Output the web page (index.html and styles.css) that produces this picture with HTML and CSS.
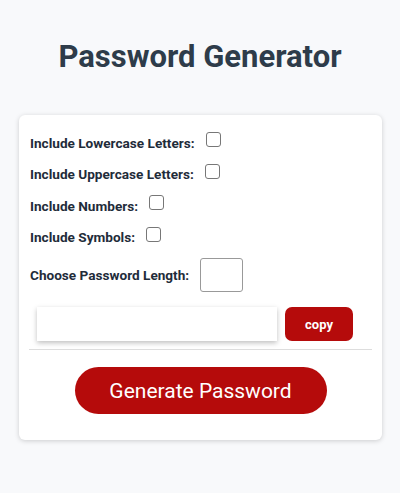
FILE: index.html
```html
<!DOCTYPE html>
<html>
<head>
<meta charset="utf-8">
<link rel="stylesheet" href="styles.css">
</head>
<body>
<h1 class="title">Password Generator</h1>
<div class="card">
  <div class="row"><label>Include Lowercase Letters:</label><input type="checkbox" class="check"></div>
  <div class="row"><label>Include Uppercase Letters:</label><input type="checkbox" class="check"></div>
  <div class="row"><label>Include Numbers:</label><input type="checkbox" class="check"></div>
  <div class="row"><label>Include Symbols:</label><input type="checkbox" class="check"></div>
  <div class="row length-row"><label>Choose Password Length:</label><input type="text" class="length"></div>
  <div class="output-row">
    <input type="text" class="output" readonly>
    <button class="copy">copy</button>
  </div>
  <hr class="divider">
  <div class="gen-wrap"><button class="generate">Generate Password</button></div>
</div>
</body>
</html>
```
FILE: styles.css
```css
html, body {
  margin: 0;
  padding: 0;
}
body {
  background: #f8f9fb;
  font-family: Roboto, "Noto Sans", sans-serif;
  color: #1f2c3a;
  width: 400px;
  height: 493px;
}
.title {
  margin: 0;
  padding: 38px 0 39px;
  text-align: center;
  font-size: 31px;
  font-weight: 700;
  color: #2e3c4a;
  line-height: 38px;
}
.card {
  margin: 0 18px 0 19px;
  background: #fff;
  border-radius: 6px;
  box-shadow: 0 1px 5px rgba(0,0,0,0.18);
  padding: 12px 11px 25px 11px;
  height: 325px;
  box-sizing: border-box;
  display: flex;
  flex-direction: column;
}
.row {
  display: flex;
  align-items: center;
  gap: 11px;
  height: 31.5px;
  font-size: 13.6px;
  font-weight: 700;
}
.check {
  appearance: none;
  -webkit-appearance: none;
  width: 15px;
  height: 15px;
  margin: 0 0 6px 0;
  border: 1.5px solid #777;
  border-radius: 3px;
  box-sizing: border-box;
  background: #fff;
}
.length-row {
  height: 36px;
  margin-top: 4px;
}
.length {
  width: 43px;
  height: 34px;
  box-sizing: border-box;
  border: 1.5px solid #999;
  border-radius: 3px;
  margin: 0;
}
.output-row {
  display: flex;
  align-items: center;
  gap: 8px;
  margin-top: 14px;
  padding-left: 7px;
}
.output {
  width: 240px;
  height: 34px;
  box-sizing: border-box;
  border: none;
  box-shadow: 0 2px 5px rgba(0,0,0,0.25);
  margin: 0;
}
.copy {
  width: 68px;
  height: 34px;
  border: none;
  border-radius: 7px;
  background: #b50b0b;
  color: #fff;
  font-family: Roboto, sans-serif;
  font-weight: 700;
  font-size: 13px;
  padding: 0;
}
.divider {
  border: none;
  border-top: 1px solid #ddd;
  margin: 8px -1px 0 -1px;
}
.gen-wrap {
  display: flex;
  justify-content: center;
  margin-top: 17px;
}
.generate {
  width: 252px;
  height: 47px;
  border: none;
  border-radius: 24px;
  background: #b50b0b;
  color: #fff;
  font-family: Roboto, sans-serif;
  font-size: 21px;
  font-weight: 400;
  padding: 0;
}
```
